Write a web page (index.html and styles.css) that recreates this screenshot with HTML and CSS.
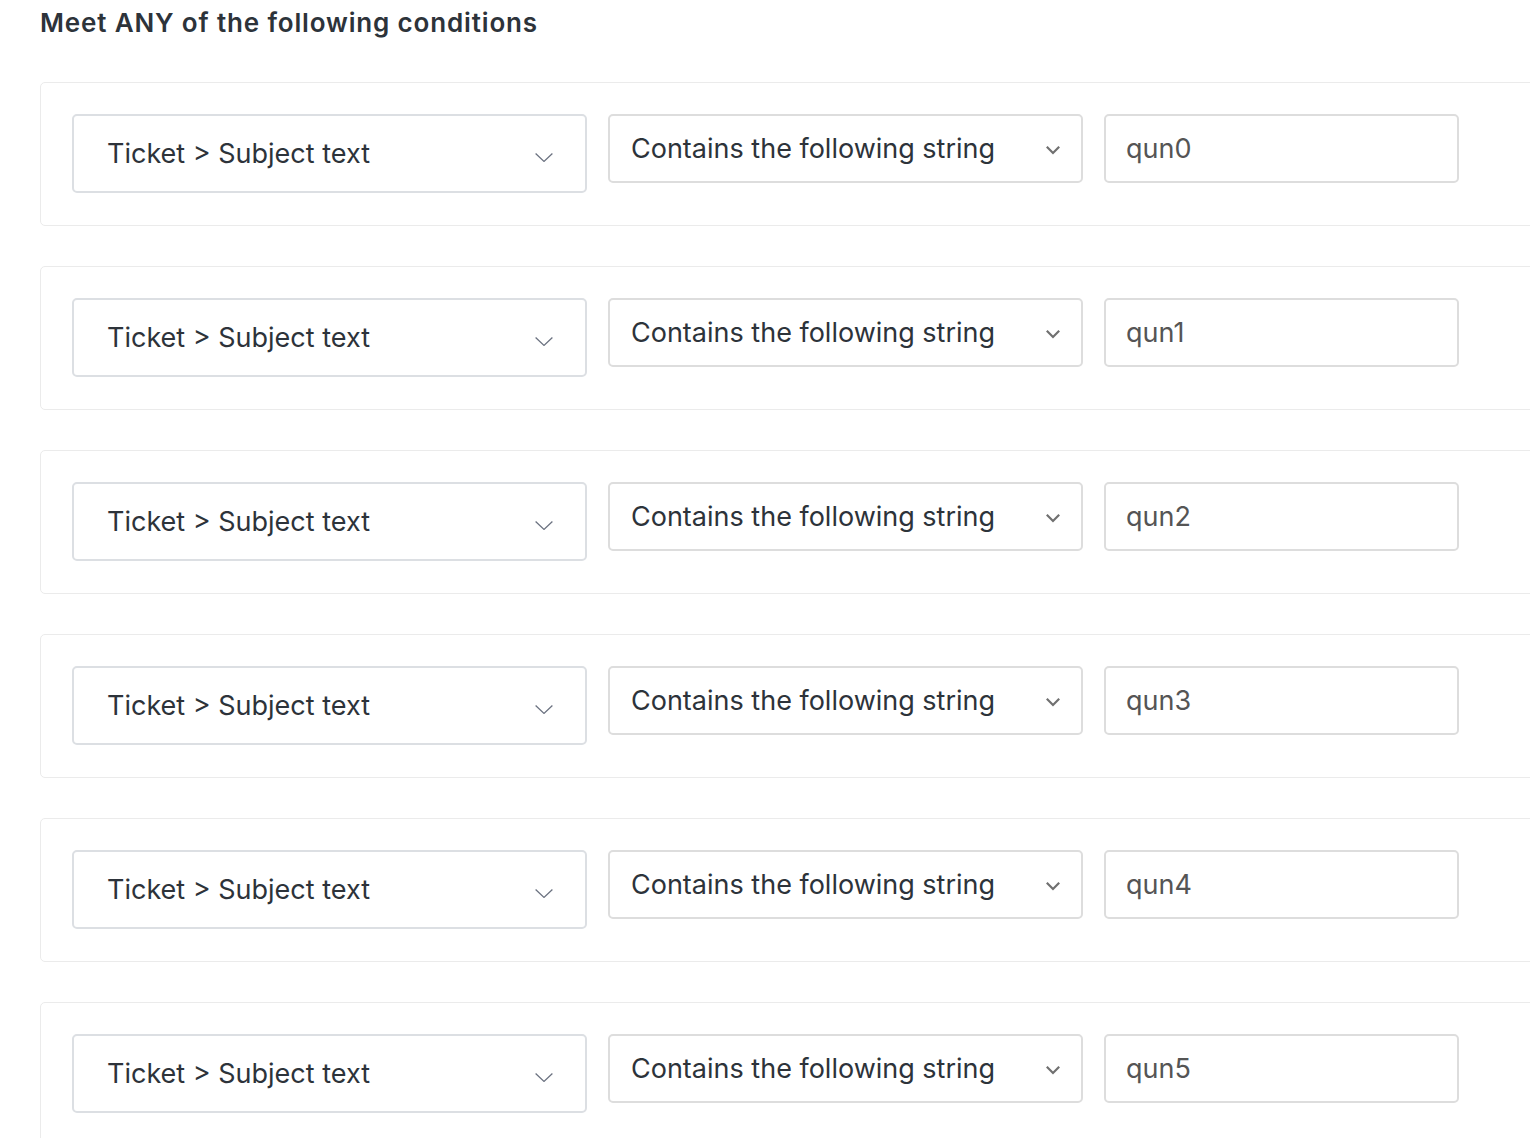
FILE: index.html
```html
<!DOCTYPE html>
<html>
<head>
<meta charset="utf-8">
<link rel="stylesheet" href="styles.css">
</head>
<body>
<div class="page">
  <h2 class="title">Meet ANY of the following conditions</h2>
  <div class="list">
    <div class="card">
      <div class="field-select"><span>Ticket &gt; Subject text</span><svg class="chev-thin" viewBox="0 0 18 9"><path d="M0.6 0.6 L9 8.4 L17.4 0.6"/></svg></div>
      <div class="op-select"><span>Contains the following string</span><svg class="chev-bold" viewBox="0 0 16 10"><path d="M1.8 1.8 L8 8 L14.2 1.8"/></svg></div>
      <div class="value-input">qun0</div>
    </div>
    <div class="card">
      <div class="field-select"><span>Ticket &gt; Subject text</span><svg class="chev-thin" viewBox="0 0 18 9"><path d="M0.6 0.6 L9 8.4 L17.4 0.6"/></svg></div>
      <div class="op-select"><span>Contains the following string</span><svg class="chev-bold" viewBox="0 0 16 10"><path d="M1.8 1.8 L8 8 L14.2 1.8"/></svg></div>
      <div class="value-input">qun1</div>
    </div>
    <div class="card">
      <div class="field-select"><span>Ticket &gt; Subject text</span><svg class="chev-thin" viewBox="0 0 18 9"><path d="M0.6 0.6 L9 8.4 L17.4 0.6"/></svg></div>
      <div class="op-select"><span>Contains the following string</span><svg class="chev-bold" viewBox="0 0 16 10"><path d="M1.8 1.8 L8 8 L14.2 1.8"/></svg></div>
      <div class="value-input">qun2</div>
    </div>
    <div class="card">
      <div class="field-select"><span>Ticket &gt; Subject text</span><svg class="chev-thin" viewBox="0 0 18 9"><path d="M0.6 0.6 L9 8.4 L17.4 0.6"/></svg></div>
      <div class="op-select"><span>Contains the following string</span><svg class="chev-bold" viewBox="0 0 16 10"><path d="M1.8 1.8 L8 8 L14.2 1.8"/></svg></div>
      <div class="value-input">qun3</div>
    </div>
    <div class="card">
      <div class="field-select"><span>Ticket &gt; Subject text</span><svg class="chev-thin" viewBox="0 0 18 9"><path d="M0.6 0.6 L9 8.4 L17.4 0.6"/></svg></div>
      <div class="op-select"><span>Contains the following string</span><svg class="chev-bold" viewBox="0 0 16 10"><path d="M1.8 1.8 L8 8 L14.2 1.8"/></svg></div>
      <div class="value-input">qun4</div>
    </div>
    <div class="card">
      <div class="field-select"><span>Ticket &gt; Subject text</span><svg class="chev-thin" viewBox="0 0 18 9"><path d="M0.6 0.6 L9 8.4 L17.4 0.6"/></svg></div>
      <div class="op-select"><span>Contains the following string</span><svg class="chev-bold" viewBox="0 0 16 10"><path d="M1.8 1.8 L8 8 L14.2 1.8"/></svg></div>
      <div class="value-input">qun5</div>
    </div>
  </div>
</div>
</body>
</html>
```
FILE: styles.css
```css
html, body {
  margin: 0;
  padding: 0;
  background: #ffffff;
  overflow: hidden;
}
body {
  font-family: Inter, Roboto, "Liberation Sans", Arial, sans-serif;
  color: #2d333a;
}
.page {
  padding: 0 0 0 40px;
  width: 1530px;
}
.title {
  margin: 0;
  padding-top: 6px;
  height: 82px;
  box-sizing: border-box;
  font-size: 26px;
  line-height: 34px;
  font-weight: 600;
  letter-spacing: 0.85px;
  color: #2d333a;
}
.list {
  display: flex;
  flex-direction: column;
  gap: 40px;
}
.card {
  width: 1520px;
  box-sizing: border-box;
  border: 1px solid #ebebeb;
  border-radius: 5px;
  padding: 31px 31px;
  display: flex;
  align-items: flex-start;
  gap: 21px;
  height: 144px;
}
.field-select {
  width: 515px;
  height: 79px;
  box-sizing: border-box;
  border: 2px solid #dcdfe3;
  border-radius: 5px;
  display: flex;
  align-items: center;
  justify-content: space-between;
  padding: 0 32px 0 33px;
  font-size: 27px;
  color: #2d333a;
}
.chev-thin {
  width: 18px;
  height: 9px;
  margin-top: 7px;
}
.chev-thin path {
  fill: none;
  stroke: #6b7280;
  stroke-width: 1.3;
}
.op-select {
  width: 475px;
  height: 69px;
  box-sizing: border-box;
  border: 2px solid #dddddd;
  border-radius: 5px;
  display: flex;
  align-items: center;
  justify-content: space-between;
  padding: 0 20px 0 21px;
  font-size: 27px;
  color: #2d333a;
}
.chev-bold {
  width: 16px;
  height: 10px;
  margin-top: 3px;
}
.chev-bold path {
  fill: none;
  stroke: #707070;
  stroke-width: 2.2;
}
.value-input {
  width: 355px;
  height: 69px;
  box-sizing: border-box;
  border: 2px solid #dddddd;
  border-radius: 5px;
  display: flex;
  align-items: center;
  padding: 0 20px;
  font-size: 27px;
  color: #555555;
}
```
